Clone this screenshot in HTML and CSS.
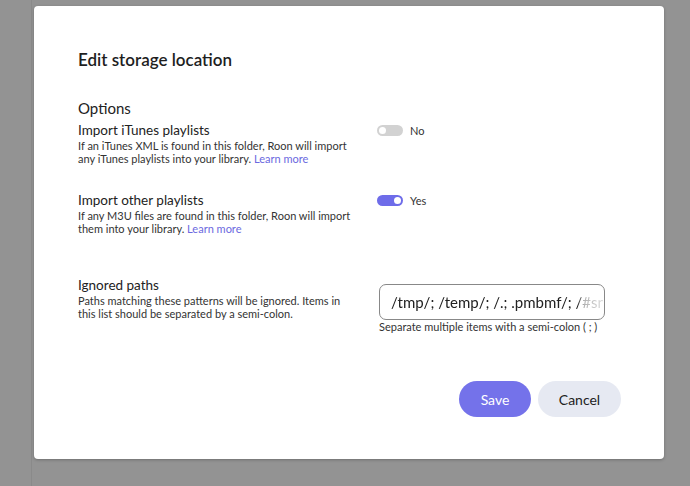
FILE: index.html
```html
<!DOCTYPE html>
<html lang="en">
<head>
    <meta charset="UTF-8">
    <meta name="viewport" content="width=device-width, initial-scale=1.0">
    <title>Edit storage location</title>
    <link rel="stylesheet" href="styles.css">
</head>
<body>

<div class="backdrop">
    <div class="edge-line"></div>

    <!-- Dialog -->
    <div class="dialog">
        <h2 class="dialog-title">Edit storage location</h2>

        <div class="section-title">Options</div>

        <div class="option-row">
            <div class="option-text">
                <div class="option-name">Import iTunes playlists</div>
                <div class="option-desc">If an iTunes XML is found in this folder, Roon will import any iTunes playlists into your library. <a href="#">Learn more</a></div>
            </div>
            <div class="option-control">
                <span class="toggle"></span>
                <span class="toggle-label">No</span>
            </div>
        </div>

        <div class="option-row">
            <div class="option-text">
                <div class="option-name">Import other playlists</div>
                <div class="option-desc">If any M3U files are found in this folder, Roon will import them into your library. <a href="#">Learn more</a></div>
            </div>
            <div class="option-control">
                <span class="toggle on"></span>
                <span class="toggle-label">Yes</span>
            </div>
        </div>

        <div class="option-row paths-row">
            <div class="option-text">
                <div class="option-name">Ignored paths</div>
                <div class="option-desc">Paths matching these patterns will be ignored. Items in this list should be separated by a semi-colon.</div>
            </div>
            <div class="option-input">
                <div class="text-input"><span class="text-value">/tmp/; /temp/; /.; .pmbmf/; /#snapshot/; /@eaDir/</span></div>
                <div class="input-help">Separate multiple items with a semi-colon ( ; )</div>
            </div>
        </div>

        <div class="dialog-buttons">
            <button class="btn btn-save">Save</button>
            <button class="btn btn-cancel">Cancel</button>
        </div>
    </div>
</div>

</body>
</html>
```

FILE: styles.css
```css
body {
    margin: 0;
    padding: 0;
    font-family: Lato, 'Open Sans', sans-serif;
    background-color: #939393;
    color: #222;
    overflow: hidden;
}

.backdrop {
    position: relative;
    height: 486px;
    padding: 6px 0 0 34px;
    box-sizing: border-box;
}

/* faint line of the page behind the overlay */
.edge-line {
    position: absolute;
    left: 31px;
    top: 0;
    bottom: 0;
    width: 1px;
    background-color: #8a8a8a;
}

.dialog {
    position: relative;
    width: 630px;
    height: 453px;
    box-sizing: border-box;
    background-color: #fff;
    border-radius: 4px;
    box-shadow: 0 1px 3px rgba(0, 0, 0, 0.25);
    padding: 43px 43px 0 44px;
}

.dialog-title {
    margin: 0;
    font-size: 17px;
    font-weight: 600;
    line-height: 22px;
    color: #1e1e1e;
}

.section-title {
    margin-top: 28px;
    font-size: 15px;
    line-height: 18px;
    color: #222;
}

.option-row {
    display: grid;
    grid-template-columns: 299px 1fr;
    margin-top: 5px;
}

.option-row + .option-row {
    margin-top: 27px;
}

.option-row.paths-row {
    margin-top: 42px;
}

.option-name {
    font-size: 13.5px;
    line-height: 17px;
    color: #222;
}

.option-desc {
    font-size: 11px;
    line-height: 13px;
    color: #333;
    padding-right: 18px;
}

.option-desc a {
    color: #6b69e0;
    text-decoration: none;
}

.option-control {
    display: flex;
    align-items: center;
    gap: 7px;
    height: 16px;
}

.toggle {
    position: relative;
    width: 26px;
    height: 11px;
    border-radius: 6px;
    background-color: #d2d2d2;
}

.toggle::after {
    content: '';
    position: absolute;
    left: 2px;
    top: 2px;
    width: 7px;
    height: 7px;
    border-radius: 50%;
    background-color: #fff;
}

.toggle.on {
    background-color: #6e6ce9;
}

.toggle.on::after {
    left: auto;
    right: 2px;
}

.toggle-label {
    font-size: 11px;
    color: #333;
}

.option-input {
    padding-left: 2px;
    margin-top: 7px;
}

.text-input {
    width: 226px;
    height: 36px;
    box-sizing: border-box;
    border: 1px solid #888;
    border-radius: 7px;
    padding: 0 1px 0 11px;
    display: flex;
    align-items: center;
    overflow: hidden;
}

.text-value {
    white-space: nowrap;
    overflow: hidden;
    font-size: 15px;
    color: #222;
    -webkit-mask-image: linear-gradient(to right, #000 88%, rgba(0, 0, 0, 0.35) 91%, rgba(0, 0, 0, 0.15) 100%);
    mask-image: linear-gradient(to right, #000 88%, rgba(0, 0, 0, 0.35) 91%, rgba(0, 0, 0, 0.15) 100%);
}

.input-help {
    margin-top: 0;
    font-size: 11px;
    line-height: 13px;
    color: #333;
}

.dialog-buttons {
    display: flex;
    justify-content: flex-end;
    gap: 7px;
    margin-top: 48px;
}

.btn {
    height: 36px;
    border: none;
    border-radius: 18px;
    font-family: Lato, 'Open Sans', sans-serif;
    font-size: 14px;
    cursor: pointer;
}

.btn-save {
    width: 72px;
    background-color: #7472ea;
    color: #fff;
}

.btn-cancel {
    width: 83px;
    background-color: #e6e9f2;
    color: #222;
}
```
